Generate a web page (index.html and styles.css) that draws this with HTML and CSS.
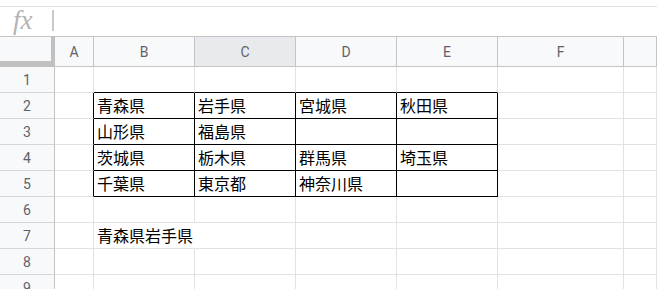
FILE: index.html
```html
<!DOCTYPE html>
<html>
  <head>
    <title>Sheet</title>
    <meta charset="UTF-8" />
    <link rel="stylesheet" href="styles.css">
  </head>

  <body>
    <div class="formula-bar">
      <span class="fx">fx</span>
      <span class="divider"></span>
    </div>
    <div class="sheet">
      <!-- column headers -->
      <div class="corner"></div>
      <div class="col-head">A</div>
      <div class="col-head">B</div>
      <div class="col-head selected">C</div>
      <div class="col-head">D</div>
      <div class="col-head">E</div>
      <div class="col-head">F</div>
      <div class="col-head"></div>
      <!-- row 1 -->
      <div class="row-head">1</div>
      <div class="cell"></div>
      <div class="cell edge-b"></div>
      <div class="cell edge-b"></div>
      <div class="cell edge-b"></div>
      <div class="cell edge-b"></div>
      <div class="cell"></div>
      <div class="cell"></div>
      <!-- row 2 -->
      <div class="row-head">2</div>
      <div class="cell edge-r"></div>
      <div class="cell box">青森県</div>
      <div class="cell box">岩手県</div>
      <div class="cell box">宮城県</div>
      <div class="cell box">秋田県</div>
      <div class="cell"></div>
      <div class="cell"></div>
      <!-- row 3 -->
      <div class="row-head">3</div>
      <div class="cell edge-r"></div>
      <div class="cell box">山形県</div>
      <div class="cell box">福島県</div>
      <div class="cell box"></div>
      <div class="cell box"></div>
      <div class="cell"></div>
      <div class="cell"></div>
      <!-- row 4 -->
      <div class="row-head">4</div>
      <div class="cell edge-r"></div>
      <div class="cell box">茨城県</div>
      <div class="cell box">栃木県</div>
      <div class="cell box">群馬県</div>
      <div class="cell box">埼玉県</div>
      <div class="cell"></div>
      <div class="cell"></div>
      <!-- row 5 -->
      <div class="row-head">5</div>
      <div class="cell edge-r"></div>
      <div class="cell box">千葉県</div>
      <div class="cell box">東京都</div>
      <div class="cell box">神奈川県</div>
      <div class="cell box"></div>
      <div class="cell"></div>
      <div class="cell"></div>
      <!-- row 6 -->
      <div class="row-head">6</div>
      <div class="cell"></div>
      <div class="cell"></div>
      <div class="cell"></div>
      <div class="cell"></div>
      <div class="cell"></div>
      <div class="cell"></div>
      <div class="cell"></div>
      <!-- row 7 -->
      <div class="row-head">7</div>
      <div class="cell"></div>
      <div class="cell spill">青森県岩手県</div>
      <div class="cell"></div>
      <div class="cell"></div>
      <div class="cell"></div>
      <div class="cell"></div>
      <div class="cell"></div>
      <!-- row 8 -->
      <div class="row-head">8</div>
      <div class="cell"></div>
      <div class="cell"></div>
      <div class="cell"></div>
      <div class="cell"></div>
      <div class="cell"></div>
      <div class="cell"></div>
      <div class="cell"></div>
      <!-- row 9 -->
      <div class="row-head">9</div>
      <div class="cell"></div>
      <div class="cell"></div>
      <div class="cell"></div>
      <div class="cell"></div>
      <div class="cell"></div>
      <div class="cell"></div>
      <div class="cell"></div>
    </div>
  </body>
</html>
```

FILE: styles.css
```css
html {
  height: 100%;
  overflow: hidden;
}
body {
  margin: 0;
  height: 100%;
  background: #fff;
  font-family: Roboto, "Liberation Sans", sans-serif;
}
.formula-bar {
  margin-top: 6px;
  height: 29px;
  border-top: 1px solid #e1e1e1;
  display: flex;
  align-items: center;
}
.fx {
  font-family: "Liberation Serif", serif;
  font-style: italic;
  font-size: 27px;
  color: #b4b4b4;
  margin-left: 13px;
  width: 39px;
  line-height: 22px;
  margin-top: -3px;
}
.divider {
  width: 2px;
  height: 21px;
  background: #c9c9c9;
  margin-top: -2px;
}
.sheet {
  display: grid;
  grid-template-columns: 55px 39px 101px 101px 101px 101px 126px 1fr;
  grid-template-rows: 31px;
  grid-auto-rows: 26px;
}
.corner {
  background: #f8f9fa;
  border-top: 1px solid #c4c4c4;
  border-right: 4px solid #c0c0c0;
  border-bottom: 6px solid #c0c0c0;
}
.col-head {
  background: #f8f9fa;
  border-top: 1px solid #c4c4c4;
  border-bottom: 1px solid #c4c4c4;
  border-right: 1px solid #c4c4c4;
  color: #5f6368;
  font-size: 14px;
  display: flex;
  align-items: center;
  justify-content: center;
}
.col-head.selected {
  background: #e8eaed;
}
.row-head {
  background: #f8f9fa;
  border-right: 1px solid #c4c4c4;
  border-bottom: 1px solid #d6d6d6;
  color: #5f6368;
  font-size: 14px;
  display: flex;
  align-items: center;
  justify-content: center;
}
.cell,
.corner,
.col-head,
.row-head {
  box-sizing: border-box;
}
.cell {
  border-right: 1px solid #e2e2e3;
  border-bottom: 1px solid #e2e2e3;
  font-family: "Noto Sans CJK JP", sans-serif;
  font-size: 16px;
  line-height: 24px;
  color: #000;
  padding-left: 3px;
  white-space: nowrap;
}
.edge-r {
  border-right-color: #000;
}
.edge-b {
  border-bottom-color: #000;
}
.box {
  border-right-color: #000;
  border-bottom-color: #000;
}
.spill {
  border-right-color: transparent;
  overflow: visible;
}
```
